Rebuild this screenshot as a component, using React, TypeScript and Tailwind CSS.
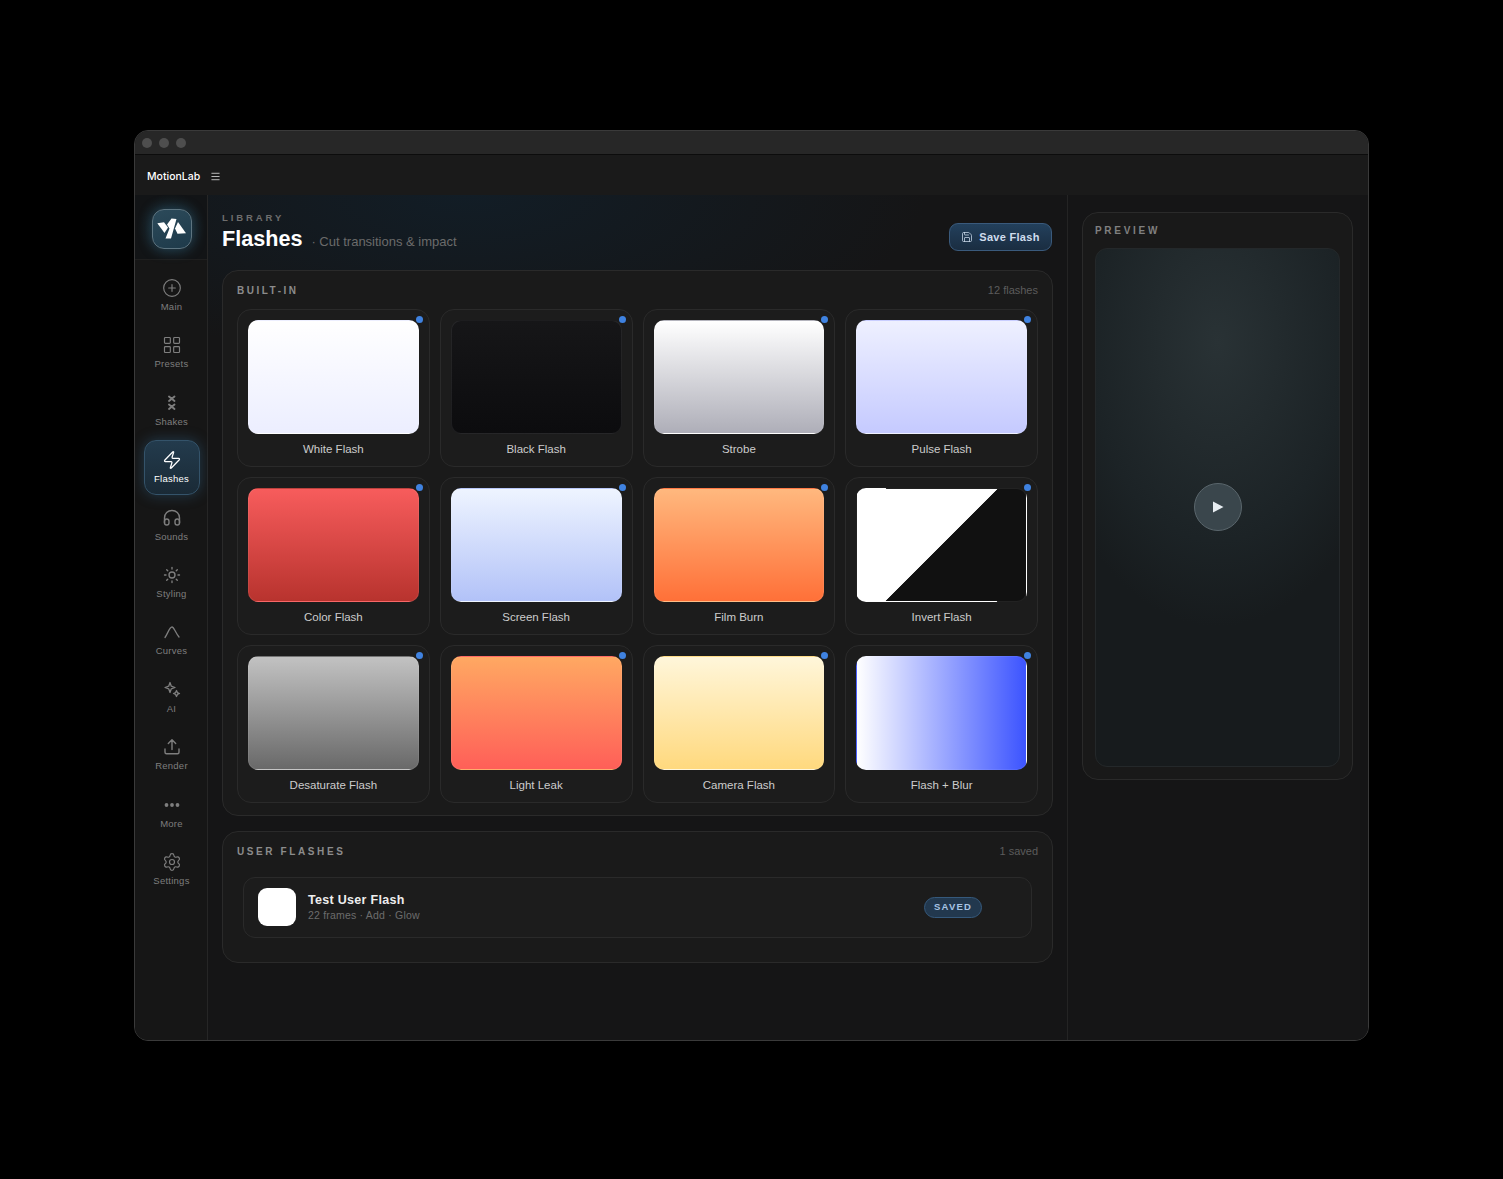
import { CirclePlus, LayoutGrid, Zap, Sun, Settings, Save, Menu } from 'lucide-react'
import type { ReactNode } from 'react'

const font = 'font-["Liberation_Sans",Arial,sans-serif]'

function ShakesIcon() {
  return (
    <svg width="20" height="20" viewBox="0 0 20 20" fill="none" stroke="currentColor" strokeWidth="1.9" strokeLinecap="round">
      <path d="M7 3.500l5.500 4.500M12.500 3.500 7 8M7 11.500l5.500 4.500M12.500 11.500 7 16" />
    </svg>
  )
}

function HeadphonesIcon() {
  return (
    <svg width="20" height="20" viewBox="0 0 20 20" fill="none" stroke="currentColor" strokeWidth="1.4" strokeLinecap="round">
      <path d="M2.500 15V10C2.500 5.500 5.800 2.500 10 2.500s7.500 3 7.500 7.500v5" />
      <rect x="2.500" y="11" width="4.500" height="6" rx="2.200" />
      <rect x="13" y="11" width="4.500" height="6" rx="2.200" />
    </svg>
  )
}

function CurvesIcon() {
  return (
    <svg width="20" height="20" viewBox="0 0 20 20" fill="none" stroke="currentColor" strokeWidth="1.3" strokeLinecap="round">
      <path d="M3 15.500C5.500 12 7.500 5 10 5c2 0 3.500 6 7 10" />
    </svg>
  )
}

function StarsIcon() {
  return (
    <svg width="20" height="20" viewBox="0 0 20 20" fill="none" stroke="currentColor" strokeWidth="1.3" strokeLinejoin="round">
      <path d="M8 2.500l1.300 3.700L13 7.500 9.300 8.800 8 12.500 6.700 8.800 3 7.500l3.700-1.300z" />
      <path d="M14.500 10.500l.9 2.100 2.100.9-2.100.9-.9 2.100-.9-2.100-2.100-.9 2.100-.9z" />
    </svg>
  )
}

function RenderIcon() {
  return (
    <svg width="20" height="20" viewBox="0 0 20 20" fill="none" stroke="currentColor" strokeWidth="1.4" strokeLinecap="round" strokeLinejoin="round">
      <path d="M10 12.500V3M6.300 6.500 10 2.800l3.700 3.700M3 12v3.300c0 .9.6 1.500 1.500 1.500h11c.9 0 1.500-.6 1.500-1.500V12" />
    </svg>
  )
}

function DotsIcon() {
  return (
    <svg width="20" height="20" viewBox="0 0 20 20" fill="currentColor">
      <circle cx="4.500" cy="10" r="1.900" />
      <circle cx="10" cy="10" r="1.900" />
      <circle cx="15.500" cy="10" r="1.900" />
    </svg>
  )
}

const navItems: { label: string; icon: ReactNode; active?: boolean }[] = [
  { label: 'Main', icon: <CirclePlus size={20} strokeWidth={1.4} /> },
  { label: 'Presets', icon: <LayoutGrid size={20} strokeWidth={1.4} /> },
  { label: 'Shakes', icon: <ShakesIcon /> },
  { label: 'Flashes', icon: <Zap size={20} strokeWidth={1.5} />, active: true },
  { label: 'Sounds', icon: <HeadphonesIcon /> },
  { label: 'Styling', icon: <Sun size={18} strokeWidth={1.8} className="m-[1px]" /> },
  { label: 'Curves', icon: <CurvesIcon /> },
  { label: 'AI', icon: <StarsIcon /> },
  { label: 'Render', icon: <RenderIcon /> },
  { label: 'More', icon: <DotsIcon /> },
  { label: 'Settings', icon: <Settings size={20} strokeWidth={1.4} /> },
]

const flashes: { name: string; bg: string }[] = [
  { name: 'White Flash', bg: 'bg-[linear-gradient(180deg,#ffffff,#eceeff)]' },
  { name: 'Black Flash', bg: 'bg-[linear-gradient(180deg,#161618,#0c0c0e)]' },
  { name: 'Strobe', bg: 'bg-[linear-gradient(180deg,#ffffff,#aeaeb8)]' },
  { name: 'Pulse Flash', bg: 'bg-[linear-gradient(180deg,#eef0ff,#c5caff)]' },
  { name: 'Color Flash', bg: 'bg-[linear-gradient(180deg,#f75c5c,#b8332e)]' },
  { name: 'Screen Flash', bg: 'bg-[linear-gradient(180deg,#eef4ff,#b2c2f8)]' },
  { name: 'Film Burn', bg: 'bg-[linear-gradient(180deg,#ffb87e,#ff7038)]' },
  { name: 'Invert Flash', bg: 'bg-[linear-gradient(135deg,#ffffff_49.8%,#111111_50.2%)]' },
  { name: 'Desaturate Flash', bg: 'bg-[linear-gradient(180deg,#c2c2c2,#696969)]' },
  { name: 'Light Leak', bg: 'bg-[linear-gradient(180deg,#ffa862,#ff5f58)]' },
  { name: 'Camera Flash', bg: 'bg-[linear-gradient(180deg,#fff6da,#ffd97e)]' },
  { name: 'Flash + Blur', bg: 'bg-[linear-gradient(90deg,#ffffff,#3c54ff)]' },
]

function FlashCard({ name, bg }: { name: string; bg: string }) {
  return (
    <div className="relative h-[158px] rounded-[14px] border border-[#2a2a2a] bg-[#1c1c1c] px-[10px] pt-[10px]">
      <div className={`h-[114px] rounded-[10px] border border-white/[0.07] ${bg}`} />
      <div className="absolute right-[6px] top-[6px] h-[7px] w-[7px] rounded-full bg-[#3f82e0]" />
      <div className="mt-[8px] text-center text-[11.5px] leading-[14px] text-[#cccccc]">{name}</div>
    </div>
  )
}

function Logo() {
  return (
    <div className="flex h-[40px] w-[40px] items-center justify-center rounded-[12px] border border-[#5d7480] bg-[linear-gradient(160deg,#2c4a5a,#1e3a4a)] shadow-[0_0_14px_rgba(70,150,190,0.4)]">
      <svg width="30" height="24" viewBox="0 0 30 24" fill="#ffffff">
        <path d="M0.300 6.300 7 5.300 11 10.500 7.500 16z" />
        <path d="M14.500 1.500 19.500 2 14 21.500 8.500 21.500 12.500 11.500 10 7.500z" />
        <path d="M21 5 29 16.300 20.500 16.800 18 11.500z" />
      </svg>
    </div>
  )
}

export default function App() {
  return (
    <div className={`min-h-screen bg-black pl-[134px] pt-[130px] ${font}`}>
      <div className="flex h-[911px] w-[1235px] flex-col overflow-hidden rounded-[14px] border border-[#3a3a3a] bg-[#151515]">
        <div className="flex h-[24px] shrink-0 items-center gap-[7px] border-b border-[#0c0c0c] bg-[#272727] pl-[7px]">
          <div className="h-[10px] w-[10px] rounded-full bg-[#4e4e4e]" />
          <div className="h-[10px] w-[10px] rounded-full bg-[#4e4e4e]" />
          <div className="h-[10px] w-[10px] rounded-full bg-[#4e4e4e]" />
        </div>
        <div className="flex h-[40px] shrink-0 items-center gap-[10px] bg-[#1a1a1a] pl-[12px] pt-[3px] text-white">
          <span className="font-['Inter',sans-serif] text-[10.5px] font-medium">MotionLab</span>
          <Menu size={11} strokeWidth={1.5} />
        </div>
        <div className="flex min-h-0 flex-1">
          <aside className="w-[73px] shrink-0 border-r border-[#262626] bg-[#161616]">
            <div className="flex h-[65px] items-center justify-center border-b border-[#1f1f1f] bg-[radial-gradient(circle_at_50%_50%,#14232b,#121416_70%)] pl-[1px] pt-[4px]">
              <Logo />
            </div>
            <nav className="flex flex-col items-center gap-[2.4px] pl-[1px] pt-[8px]">
              {navItems.map((item) => (
                <div
                  key={item.label}
                  className={
                    item.active
                      ? 'flex h-[55px] w-[56px] flex-col items-center justify-center gap-[3px] rounded-[12px] border border-[#34536a] bg-[linear-gradient(180deg,#233b4d,#1a2a36)] text-white shadow-[0_0_14px_rgba(60,130,180,0.35)]'
                      : 'flex h-[55px] w-[56px] flex-col items-center justify-center gap-[3px] rounded-[12px] text-[#7e7e7e]'
                  }
                >
                  {item.icon}
                  <span className="text-[9.5px] leading-[12px] tracking-[0.25px]">{item.label}</span>
                </div>
              ))}
            </nav>
          </aside>

          <main className="flex w-[860px] shrink-0 flex-col border-r border-[#242424] bg-[radial-gradient(ellipse_460px_170px_at_30%_0%,#121d26,#151516_100%)] px-[14px]">
            <div className="flex h-[75px] shrink-0 items-start justify-between pt-[17px]">
              <div>
                <div className="text-[9.5px] font-bold leading-[11px] tracking-[2.9px] text-[#6e6e6e]">LIBRARY</div>
                <div className="mt-[2px] flex items-center gap-[9px]">
                  <h1 className="text-[21.6px] font-bold leading-[28px] text-white">Flashes</h1>
                  <span className="pt-[6px] text-[13px] leading-[16px] text-[#6b6b6b]">· Cut transitions &amp; impact</span>
                </div>
              </div>
              <button className="mr-[1px] mt-[11px] flex h-[28px] w-[103px] items-center justify-center gap-[6px] rounded-[9px] border border-[#3a5a7c] bg-[linear-gradient(180deg,#23405c,#1a2d41)] text-[11px] font-bold tracking-[0.3px] text-[#cfdded]">
                <Save size={12} strokeWidth={1.5} />
                Save Flash
              </button>
            </div>

            <section className="h-[546px] rounded-[16px] border border-[#2a2a2a] bg-[#1a1a1a] px-[14px]">
              <div className="flex h-[38px] items-center justify-between">
                <span className="text-[10px] font-bold tracking-[2.5px] text-[#8c8c8c]">BUILT-IN</span>
                <span className="text-[11px] text-[#5c5c5c]">12 flashes</span>
              </div>
              <div className="grid grid-cols-4 gap-x-[10px] gap-y-[10px]">
                {flashes.map((f) => (
                  <FlashCard key={f.name} name={f.name} bg={f.bg} />
                ))}
              </div>
            </section>

            <section className="mt-[15px] h-[132px] rounded-[16px] border border-[#2a2a2a] bg-[#1a1a1a] px-[14px]">
              <div className="flex h-[38px] items-center justify-between">
                <span className="text-[10px] font-bold tracking-[2.6px] text-[#8c8c8c]">USER FLASHES</span>
                <span className="text-[11px] text-[#5c5c5c]">1 saved</span>
              </div>
              <div className="mx-[6px] mt-[7px] flex h-[61px] items-center rounded-[12px] border border-[#2a2a2a] bg-[#1c1c1c] pb-[1px] pl-[14px]">
                <div className="h-[38px] w-[38px] shrink-0 rounded-[9px] bg-white" />
                <div className="ml-[12px] w-[616px]">
                  <div className="text-[12.5px] font-bold leading-[15px] tracking-[0.3px] text-[#eeeeee]">Test User Flash</div>
                  <div className="text-[10.5px] leading-[14px] tracking-[0.2px] text-[#6c6c6c]">22 frames · Add · Glow</div>
                </div>
                <span className="flex h-[21px] w-[58px] items-center justify-center rounded-full border border-[#35597c] bg-[#22384e] text-[9.5px] font-bold tracking-[1.2px] text-[#a8c4e4]">SAVED</span>
              </div>
            </section>
          </main>

          <div className="flex-1 bg-[#151516] pl-[14px] pr-[15px] pt-[17px]">
            <div className="h-[568px] rounded-[16px] border border-[#2a2a2a] bg-[#191919] px-[12px]">
              <div className="flex h-[35px] items-center text-[10px] font-bold tracking-[2.7px] text-[#808080]">PREVIEW</div>
              <div className="flex h-[519px] items-center justify-center rounded-[12px] border border-[#24282a] bg-[radial-gradient(ellipse_75%_55%_at_50%_18%,#293235,#1c2326_70%,#171b1d)] pb-[2px]">
                <div className="flex h-[48px] w-[48px] items-center justify-center rounded-full border border-[#5a666c] bg-[#3a464c]">
                  <svg width="12" height="12" viewBox="0 0 12 12" fill="#e8eef2" className="ml-[1px]">
                    <path d="M1 0.500 11.500 6 1 11.500z" />
                  </svg>
                </div>
              </div>
            </div>
          </div>
        </div>
      </div>
    </div>
  )
}
